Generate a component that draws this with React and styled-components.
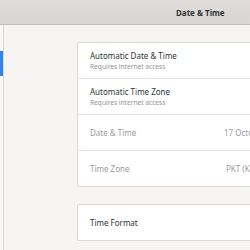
import React from "react"
import styled, { createGlobalStyle } from "styled-components"

const GlobalStyle = createGlobalStyle`
  html, body {
    margin: 0;
    padding: 0;
    background: #f6f5f4;
  }
  body {
    font-family: "Noto Sans", "Open Sans", sans-serif;
  }
`

const Window = styled.div`
  width: 250px;
  height: 250px;
  display: flex;
  flex-direction: column;
  overflow: hidden;
  background: #f6f5f4;
`

const HeaderBar = styled.header`
  height: 25px;
  flex-shrink: 0;
  display: flex;
  align-items: center;
  padding-left: 176px;
  background: linear-gradient(#dedbd8, #d9d6d3);
  border-bottom: 1px solid #c3bfbb;
  box-sizing: border-box;
`

const Title = styled.h1`
  margin: 0;
  font-size: 8px;
  font-weight: 700;
  color: #2e3436;
  white-space: nowrap;
`

const Body = styled.div`
  flex: 1;
  display: flex;
  min-height: 0;
`

const Sidebar = styled.nav`
  width: 3px;
  flex-shrink: 0;
  background: #f8f8f7;
  border-right: 1px solid #d8d4d0;
  padding-top: 26px;
`

const SideItem = styled.div`
  height: 25px;
  background: ${p => (p.$active ? "#3584e4" : "transparent")};
`

const Content = styled.main`
  flex: 1;
  padding: 17px 0 0 73px;
  display: flex;
  flex-direction: column;
  gap: 17px;
  min-width: 0;
  overflow: hidden;
`

const Card = styled.section`
  width: 220px;
  flex-shrink: 0;
  background: #ffffff;
  border: 1px solid #dcd8d4;
  border-right: none;
  border-radius: 2px 0 0 2px;
`

const Row = styled.div`
  height: 35px;
  display: flex;
  align-items: center;
  justify-content: space-between;
  padding: 0 0 0 12px;
  & + & {
    border-top: 1px solid #e6e3e0;
  }
`

const Labels = styled.div`
  display: flex;
  flex-direction: column;
  gap: 1px;
`

const RowTitle = styled.span`
  font-size: 8px;
  color: ${p => (p.$dim ? "#9a9c9a" : "#2e3436")};
  white-space: nowrap;
`

const RowSub = styled.span`
  font-size: 6.6px;
  color: #929595;
  white-space: nowrap;
`

const Value = styled.span`
  font-size: 8px;
  color: #9a9c9a;
  white-space: nowrap;
  width: ${p => p.$w}px;
  flex-shrink: 0;
`

export default function App() {
  return (
    <>
      <GlobalStyle />
      <Window>
        <HeaderBar>
          <Title>Date &amp; Time</Title>
        </HeaderBar>
        <Body>
          <Sidebar>
            <SideItem $active />
          </Sidebar>
          <Content>
            <Card>
              <Row>
                <Labels>
                  <RowTitle>Automatic Date &amp; Time</RowTitle>
                  <RowSub>Requires internet access</RowSub>
                </Labels>
              </Row>
              <Row>
                <Labels>
                  <RowTitle>Automatic Time Zone</RowTitle>
                  <RowSub>Requires internet access</RowSub>
                </Labels>
              </Row>
              <Row>
                <RowTitle $dim>Date &amp; Time</RowTitle>
                <Value $w={74}>17 October 2019, 14:32</Value>
              </Row>
              <Row>
                <RowTitle $dim>Time Zone</RowTitle>
                <Value $w={72}>PKT (Karachi, Pakistan)</Value>
              </Row>
            </Card>
            <Card>
              <Row>
                <RowTitle>Time Format</RowTitle>
              </Row>
            </Card>
          </Content>
        </Body>
      </Window>
    </>
  )
}
